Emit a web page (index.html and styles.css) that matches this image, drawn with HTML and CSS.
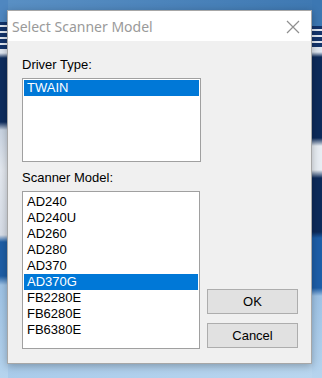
FILE: index.html
```html
<!DOCTYPE html>
<html>
<head>
<meta charset="utf-8">
<link rel="stylesheet" href="styles.css">
</head>
<body>
<div class="dialog">
  <div class="titlebar">
    <span class="title">Select Scanner Model</span>
    <svg class="close" width="14" height="14" viewBox="0 0 14 14"><path d="M1 1 L13 13 M13 1 L1 13" stroke="#8f8f8f" stroke-width="1.2" fill="none"/></svg>
  </div>
  <div class="content">
    <div class="label">Driver Type:</div>
    <div class="listbox driver">
      <div class="item selected">TWAIN</div>
    </div>
    <div class="label second">Scanner Model:</div>
    <div class="bottom">
      <div class="listbox models">
        <div class="item">AD240</div>
        <div class="item">AD240U</div>
        <div class="item">AD260</div>
        <div class="item">AD280</div>
        <div class="item">AD370</div>
        <div class="item selected">AD370G</div>
        <div class="item">FB2280E</div>
        <div class="item">FB6280E</div>
        <div class="item">FB6380E</div>
      </div>
      <div class="buttons">
        <button class="btn">OK</button>
        <button class="btn">Cancel</button>
      </div>
    </div>
  </div>
</div>
</body>
</html>
```
FILE: styles.css
```css
html, body {
  margin: 0;
  padding: 0;
}
body {
  width: 322px;
  height: 378px;
  overflow: hidden;
  font-family: "Liberation Sans", Arial, sans-serif;
  background:
    linear-gradient(to bottom,
      #4f87c0 0px, #4f87c0 22px,
      #13336a 22px, #13336a 25px, #dfe6f0 25px, #dfe6f0 27px,
      #13336a 27px, #13336a 31px, #dfe6f0 31px, #dfe6f0 33px,
      #13336a 33px, #13336a 37px, #dfe6f0 37px, #dfe6f0 39px,
      #13336a 39px, #13336a 43px, #dfe6f0 43px, #dfe6f0 45px,
      #13336a 45px, #13336a 49px, #dfe6f0 49px, #dfe6f0 53px,
      #0e2d5e 58px, #0e2d5e 122px,
      #c9d4e2 130px, #e4e9f0 170px, #d8dee8 235px,
      #1e5ea6 242px, #1e5ea6 276px,
      #9ec3e6 285px, #b6d4ee 378px) left top / 8px 378px no-repeat,
    linear-gradient(to bottom,
      #3c77b2 0px, #3c77b2 26px,
      #13336a 26px, #13336a 29px, #dfe6f0 29px, #dfe6f0 31px,
      #13336a 31px, #13336a 35px, #dfe6f0 35px, #dfe6f0 37px,
      #13336a 37px, #13336a 41px, #dfe6f0 41px, #dfe6f0 43px,
      #13336a 43px, #13336a 47px, #dfe6f0 47px, #dfe6f0 52px,
      #0c2a5a 57px, #0c2a5a 138px,
      #e8edf3 146px, #e8edf3 170px,
      #0c2a5a 178px, #0c2a5a 232px,
      #1d5ea8 238px, #1d5ea8 288px,
      #9ec3e6 296px, #b6d4ee 378px) right top / 10px 378px no-repeat,
    linear-gradient(to right, #5a90c4, #3e78b2) left top / 322px 12px no-repeat,
    linear-gradient(to right, #a9cbea, #b9d6ef) left bottom / 322px 20px no-repeat,
    #8fb6dc;
}
.dialog {
  margin: 10px 0 0 7px;
  width: 305px;
  height: 354px;
  box-sizing: border-box;
  border: 1px solid #a7a7a7;
  background: #f0f0f0;
  box-shadow: 0 2px 8px rgba(0, 0, 0, 0.28);
  display: flex;
  flex-direction: column;
}
.titlebar {
  height: 30px;
  background: #ffffff;
  display: flex;
  align-items: center;
  justify-content: space-between;
  padding: 0 11px 0 4px;
  flex-shrink: 0;
}
.title {
  font-family: "Noto Sans", "Open Sans", sans-serif;
  font-size: 14px;
  color: #9a9a9a;
  margin-top: 1px;
}
.close {
  display: block;
  margin-top: 1px;
}
.content {
  padding: 16px 13px 0 14px;
  font-size: 13px;
  line-height: 15px;
  color: #000;
}
.label {
  height: 15px;
  margin-bottom: 6px;
}
.label.second {
  margin-top: 8px;
}
.listbox {
  box-sizing: border-box;
  width: 179px;
  background: #ffffff;
  border: 1px solid #a0a0a0;
  padding: 1px 1px;
}
.driver {
  height: 84px;
}
.models {
  height: 158px;
  padding-top: 2px;
}
.item {
  height: 16px;
  line-height: 16px;
  padding-left: 3px;
  white-space: nowrap;
}
.item.selected {
  background: #0078d7;
  color: #ffffff;
}
.bottom {
  display: flex;
  align-items: flex-end;
  gap: 7px;
}
.buttons {
  display: flex;
  flex-direction: column;
  gap: 9px;
  margin-bottom: 1px;
}
.btn {
  width: 91px;
  height: 25px;
  box-sizing: border-box;
  border: 1px solid #adadad;
  background: #e1e1e1;
  font-family: "Liberation Sans", Arial, sans-serif;
  font-size: 13px;
  color: #000;
  padding: 0;
  margin: 0;
}
```
